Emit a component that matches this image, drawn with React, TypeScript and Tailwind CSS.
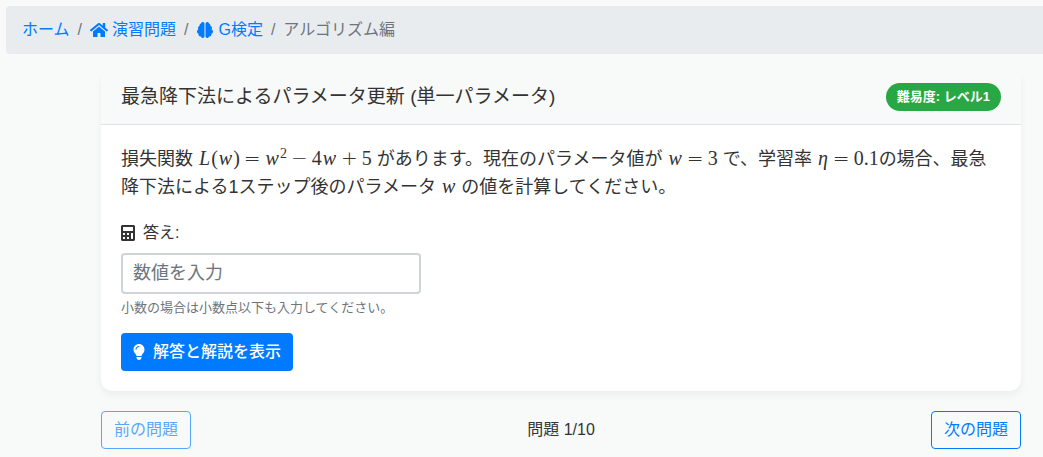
import { ReactNode, useState } from "react";
import { FaCalculator, FaHome } from "react-icons/fa";
import { FaBrain, FaLightbulb } from "react-icons/fa6";

function Var({ children }: { children: ReactNode }) {
  return <i className="mx-px">{children}</i>;
}

function Op({ children }: { children: ReactNode }) {
  return (
    <span className="mx-1 font-['DejaVu_Sans'] font-extralight leading-none">{children}</span>
  );
}

function Formula({ children }: { children: ReactNode }) {
  return (
    <span className="font-['Liberation_Serif',serif] text-[20px] leading-none whitespace-nowrap">
      {children}
    </span>
  );
}

function Breadcrumb() {
  return (
    <nav aria-label="breadcrumb" className="mt-1.5 ml-1.5 rounded-l bg-[#e9ecef] px-4 py-3">
      <ol className="flex items-center gap-2 text-[#6c757d]">
        <li>
          <a href="#home" className="text-[#007bff]">
            ホーム
          </a>
        </li>
        <li aria-hidden="true">/</li>
        <li>
          <a href="#exercises" className="flex items-center gap-1 text-[#007bff]">
            <FaHome className="h-4 w-[18px]" />
            演習問題
          </a>
        </li>
        <li aria-hidden="true">/</li>
        <li>
          <a href="#g-kentei" className="flex items-center gap-1 text-[#007bff]">
            <FaBrain className="h-4 w-[18px]" />
            G検定
          </a>
        </li>
        <li aria-hidden="true">/</li>
        <li aria-current="page">アルゴリズム編</li>
      </ol>
    </nav>
  );
}

function QuestionCard() {
  const [answer, setAnswer] = useState("");

  return (
    <section className="overflow-hidden rounded-xl bg-white shadow-[0_4px_8px_rgba(0,0,0,0.05)]">
      <header className="flex items-center justify-between border-b border-[#dee2e6] bg-[#f8faf9] px-5 py-[13px]">
        <h1 className="text-[19px] leading-7">
          最急降下法によるパラメータ更新 (単一パラメータ)
        </h1>
        <span className="rounded-full bg-[#28a745] px-[11px] text-[13px] leading-7 font-bold text-white">
          難易度: レベル1
        </span>
      </header>
      <div className="p-5">
        <p className="text-[18px] leading-7">
          損失関数{" "}
          <Formula>
            <Var>L</Var>(<Var>w</Var>)<Op>=</Op>
            <Var>w</Var>
            <sup className="text-[14px]">2</sup>
            <Op>−</Op>4<Var>w</Var>
            <Op>+</Op>5
          </Formula>{" "}
          があります。現在のパラメータ値が{" "}
          <Formula>
            <Var>w</Var>
            <Op>=</Op>3
          </Formula>{" "}
          で、学習率{" "}
          <Formula>
            <Var>η</Var>
            <Op>=</Op>0.1
          </Formula>
          の場合、最急降下法による1ステップ後のパラメータ{" "}
          <Formula>
            <Var>w</Var>
          </Formula>{" "}
          の値を計算してください。
        </p>
        <label htmlFor="answer" className="mt-5 flex items-center gap-2">
          <FaCalculator className="h-4 w-3.5" />
          答え:
        </label>
        <input
          id="answer"
          type="text"
          inputMode="decimal"
          placeholder="数値を入力"
          value={answer}
          onChange={(e) => setAnswer(e.target.value)}
          aria-describedby="answer-help"
          className="mt-2 block h-[41px] w-full max-w-[300px] rounded border-2 border-[#ced4da] bg-white px-2.5 text-[18px] placeholder:text-[#6c757d]"
        />
        <small id="answer-help" className="mt-1 block text-[13px] leading-[19px] text-[#6c757d]">
          小数の場合は小数点以下も入力してください。
        </small>
        <button
          type="button"
          className="mt-4 flex h-[38px] items-center gap-2 rounded bg-[#007bff] px-3 font-medium text-white"
        >
          <FaLightbulb className="h-4 w-3" />
          解答と解説を表示
        </button>
      </div>
    </section>
  );
}

function Pager({ current, total }: { current: number; total: number }) {
  const buttonClass =
    "h-[38px] rounded border border-[#007bff] px-3 text-[#007bff] disabled:opacity-65";
  return (
    <div className="mt-5 flex items-center justify-between">
      <button type="button" className={buttonClass} disabled={current === 1}>
        前の問題
      </button>
      <span>
        問題 {current}/{total}
      </span>
      <button type="button" className={buttonClass} disabled={current === total}>
        次の問題
      </button>
    </div>
  );
}

export default function App() {
  return (
    <div
      lang="ja"
      className="flow-root min-h-screen bg-[#f8faf9] font-['Liberation_Sans','Noto_Sans_CJK_JP',sans-serif] text-base leading-6 text-[#333]"
    >
      <Breadcrumb />
      <main className="mt-4 mr-[22px] mb-2 ml-[101px]">
        <QuestionCard />
        <Pager current={1} total={10} />
      </main>
    </div>
  );
}
